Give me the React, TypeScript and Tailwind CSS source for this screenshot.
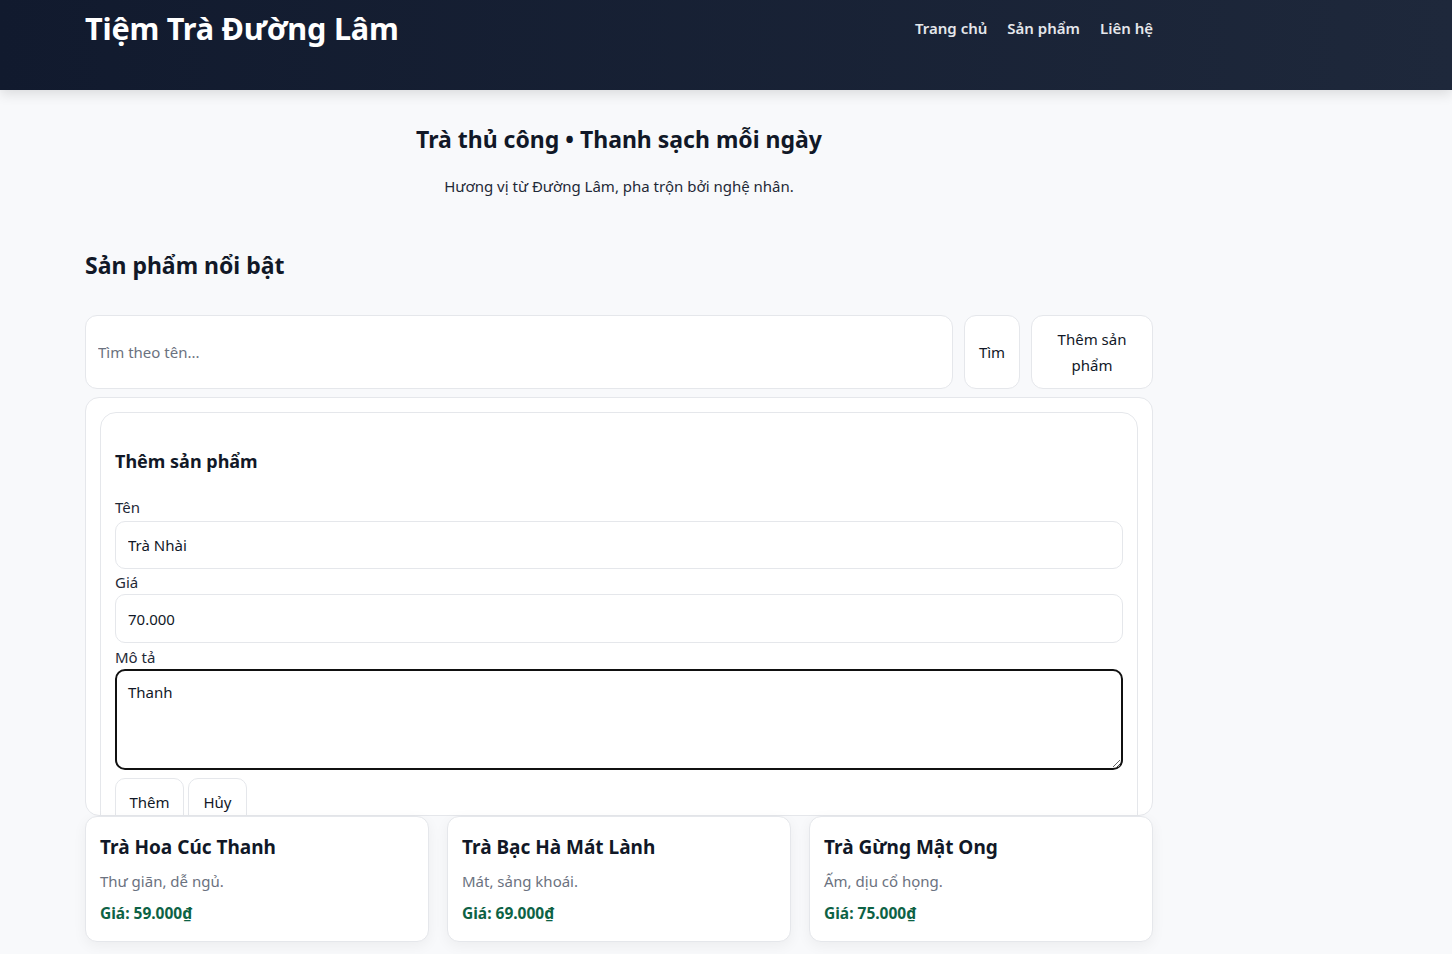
import React from "react";

const font = { fontFamily: '"Noto Sans", "Open Sans", sans-serif' };

const products = [
  { name: "Trà Hoa Cúc Thanh", desc: "Thư giãn, dễ ngủ.", price: "59.000" },
  { name: "Trà Bạc Hà Mát Lành", desc: "Mát, sảng khoái.", price: "69.000" },
  { name: "Trà Gừng Mật Ong", desc: "Ấm, dịu cổ họng.", price: "75.000" },
];

export default function App() {
  return (
    <div className="min-h-[954px] bg-[#f8f9fb] text-[#111827]" style={font}>
      <header className="h-[90px] bg-gradient-to-r from-[#111a2e] to-[#1e283b] shadow-[0_4px_12px_rgba(0,0,0,0.12)]">
        <div className="ml-[85px] w-[1068px] flex items-start justify-between pt-[7px]">
          <h1 className="text-[30.6px] font-bold text-white leading-[42px] tracking-[-0.2px]">Tiệm Trà Đường Lâm</h1>
          <nav className="flex gap-[20px] pt-[9px] text-[15px] font-semibold text-[#e5e7eb] leading-[24px]">
            <a>Trang chủ</a>
            <a>Sản phẩm</a>
            <a>Liên hệ</a>
          </nav>
        </div>
      </header>

      <main className="ml-[85px] w-[1068px]">
        <section className="pt-[32px] text-center">
          <h2 className="text-[23px] font-bold leading-[34px]">Trà thủ công • Thanh sạch mỗi ngày</h2>
          <p className="mt-[19px] text-[15px] leading-[22px] text-[#1f2937]">Hương vị từ Đường Lâm, pha trộn bởi nghệ nhân.</p>
        </section>

        <h3 className="mt-[51px] text-[23px] font-bold leading-[34px]">Sản phẩm nổi bật</h3>

        <div className="mt-[33px] flex gap-[11px]">
          <input
            className="flex-1 h-[74px] rounded-[12px] border border-[#e5e7eb] bg-white px-[12px] text-[15px] placeholder:text-[#6b7280] outline-none"
            placeholder="Tìm theo tên..."
            style={font}
          />
          <button className="w-[56px] rounded-[12px] border border-[#e5e7eb] bg-white text-[15px] leading-[26px]">Tìm</button>
          <button className="w-[122px] rounded-[12px] border border-[#e5e7eb] bg-white text-[15px] leading-[26px] px-[20px]">Thêm sản phẩm</button>
        </div>

        <div className="mt-[8px] h-[419px] overflow-hidden rounded-[14px] border border-[#e5e7eb] bg-white pt-[14px] px-[14px]">
          <div className="rounded-[16px] border border-[#e5e7eb] bg-white px-[14px] pt-[34px] pb-[20px]">
            <h4 className="text-[18px] font-bold leading-[28px]">Thêm sản phẩm</h4>
            <label className="block mt-[22px] text-[15px] leading-[20px] text-[#1f2937]">Tên</label>
            <input
              className="mt-[4px] w-full h-[48px] rounded-[10px] border border-[#e5e7eb] px-[12px] text-[15px] outline-none"
              defaultValue="Trà Nhài"
              style={font}
            />
            <label className="block mt-[1px] text-[15px] leading-[24px] text-[#1f2937]">Giá</label>
            <input
              className="w-full h-[49px] rounded-[10px] border border-[#e5e7eb] px-[12px] text-[15px] outline-none"
              defaultValue="70.000"
              style={font}
            />
            <label className="block mt-[2px] text-[15px] leading-[24px] text-[#1f2937]">Mô tả</label>
            <textarea
              className="block w-full h-[101px] rounded-[10px] border-2 border-[#111111] px-[11px] py-[10px] text-[15px] leading-[22px] outline-none resize-y"
              defaultValue="Thanh"
              style={font}
            />
            <div className="mt-[8px] flex gap-[4px]">
              <button className="h-[48px] w-[69px] rounded-[10px] border border-[#e5e7eb] bg-white text-[15px]">Thêm</button>
              <button className="h-[48px] w-[59px] rounded-[10px] border border-[#e5e7eb] bg-white text-[15px]">Hủy</button>
            </div>
          </div>
        </div>

        <div className="grid grid-cols-3 gap-[18px]">
          {products.map((p) => (
            <div
              key={p.name}
              className="h-[126px] rounded-[12px] border border-[#e5e7eb] bg-white px-[14px] pt-[16px] shadow-[0_4px_14px_rgba(0,0,0,0.05)]"
            >
              <div className="text-[19px] font-bold leading-[28px] text-[#111827]">{p.name}</div>
              <div className="mt-[9px] text-[15px] leading-[22px] text-[#6b7280]">{p.desc}</div>
              <div className="mt-[10px] text-[15.5px] font-bold leading-[22px] text-[#0d6245]">Giá: {p.price}₫</div>
            </div>
          ))}
        </div>
      </main>
    </div>
  );
}
